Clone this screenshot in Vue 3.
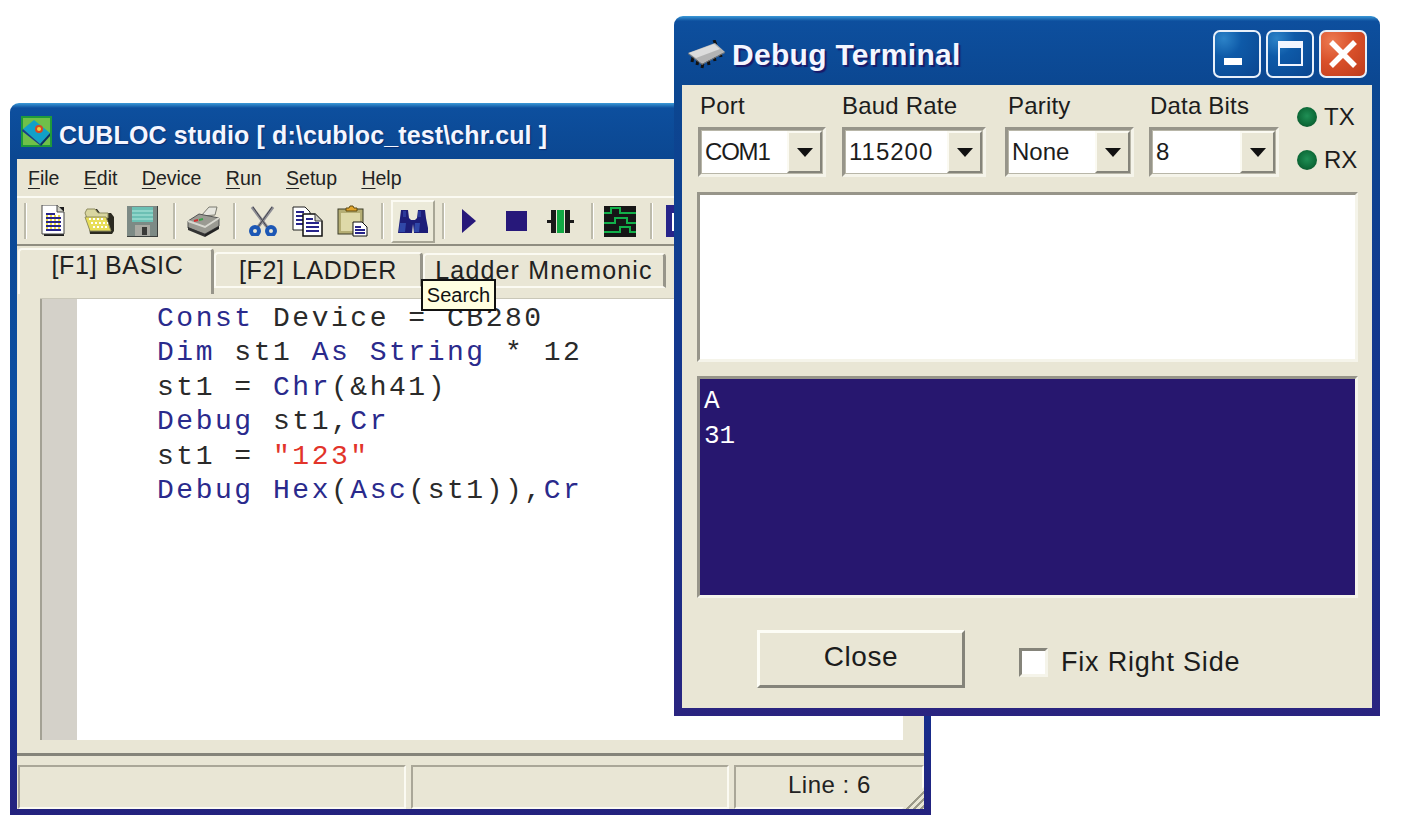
<script setup>
const menus = ['File', 'Edit', 'Device', 'Run', 'Setup', 'Help']
const fields = [
  { label: 'Port', value: 'COM1', width: 128, gap: 16, pad: 2, track: -1.2 },
  { label: 'Baud Rate', value: '115200', width: 144, gap: 19, pad: 0, track: 1 },
  { label: 'Parity', value: 'None', width: 129, gap: 15, pad: 3, track: 0 },
  { label: 'Data Bits', value: '8', width: 130, gap: 18, pad: 1, track: 0 }
]
</script>

<template>
  <div class="desk">
    <section class="win main">
      <header class="title main-title">
        <svg class="app-icon" width="31" height="31" viewBox="0 0 31 31">
          <rect width="31" height="31" fill="#1f9a3a"/>
          <rect x="2" y="2" width="27" height="27" fill="#6fc04a"/>
          <path d="M2 13 13 4l16 13-10 11z" fill="#12a0c8"/>
          <path d="M2 13l17 15 1 2L1 15z" fill="#173a8e"/>
          <path d="M19 28 29 17v3L20 30z" fill="#0b2f6b"/>
          <circle cx="18" cy="13" r="4" fill="#d8481f"/>
          <circle cx="18" cy="13" r="2" fill="#f2d23a"/>
        </svg>
        <span class="title-text">CUBLOC studio [ d:\cubloc_test\chr.cul ]</span>
      </header>
      <div class="client">
        <nav class="menubar">
          <span v-for="m in menus" :key="m" class="menu-item"><u>{{ m[0] }}</u>{{ m.slice(1) }}</span>
        </nav>
        <div class="toolbar">
          <i class="sep s0"></i>
          <svg class="g14" width="26" height="32" viewBox="0 0 26 32">
            <path d="M3 2h20v29H3z" fill="#1c1c1c"/><path d="M1 0h15l7 7v22H1z" fill="#fff" stroke="#444"/>
            <path d="M16 0v7h7" fill="#cfcfc4" stroke="#444"/>
            <path d="M5 9h9M5 13h15M5 17h15M5 21h15M5 25h15" stroke="#27248a" stroke-width="2"/>
            <path d="M5 11h15M5 15h15M5 19h15M5 23h15" stroke="#e8d84a" stroke-width="2" stroke-dasharray="2 2"/>
          </svg>
          <svg class="g17" width="30" height="28" viewBox="0 0 30 28">
            <path d="M3 6l2-4h8l3 4h11l3 4v14l-2 3H6z" fill="#2b2a20"/>
            <path d="M1 6l2-4h8l3 4h10v5H3z" fill="#d9d6a0" stroke="#8f8d60"/>
            <path d="M1 10h21l5 14H6z" fill="#e8de58" stroke="#8f8d60"/>
            <path d="M5 12h16M7 16h17M9 20h16" stroke="#fff" stroke-width="2" stroke-dasharray="2 2"/>
          </svg>
          <svg class="g13" width="31" height="31" viewBox="0 0 31 31">
            <rect width="31" height="31" fill="#7d8a85"/>
            <rect x="5" y="1" width="21" height="15" fill="#6cc0b4"/>
            <path d="M5 5h21M5 9h21M5 13h21" stroke="#9adcd0" stroke-width="1.5"/>
            <rect x="8" y="19" width="15" height="12" fill="#a9a9a2"/>
            <rect x="15" y="21" width="5" height="8" fill="#3a3a38"/>
            <path d="M31 0v31H0" fill="none" stroke="#3c3f3d" stroke-width="2"/>
          </svg>
          <i class="sep g15"></i>
          <svg class="g11" width="33" height="31" viewBox="0 0 33 31">
            <path d="M14 10 22 1h8l-2 8z" fill="#e6e6de" stroke="#7a7a70"/>
            <path d="M1 15l11-7 20 4v8l-14 8-17-6z" fill="#9a9a92" stroke="#555"/>
            <path d="M1 15l17 6 14-9" fill="none" stroke="#d8d8d0" stroke-width="2"/>
            <path d="M1 21l17 7v3L1 24z" fill="#333"/><path d="M18 28l14-8v3l-14 8z" fill="#222"/>
            <path d="M7 15l4-1" stroke="#cf3030" stroke-width="2"/><path d="M12 14l4-1" stroke="#3aa04a" stroke-width="2"/>
          </svg>
          <i class="sep g13"></i>
          <svg class="g12" width="30" height="30" viewBox="0 0 30 30">
            <path d="M4 1 19 21M25 1 10 21" stroke="#8d8d94" stroke-width="3" fill="none"/>
            <path d="M5 1 19 21M24 1 10 21" stroke="#44444c" stroke-width="1" fill="none"/>
            <circle cx="7" cy="25" r="4" fill="#e9e6d5" stroke="#1c57b5" stroke-width="4"/>
            <circle cx="23" cy="25" r="4" fill="#e9e6d5" stroke="#1c57b5" stroke-width="4"/>
          </svg>
          <svg class="g14" width="31" height="31" viewBox="0 0 31 31">
            <path d="M1 1h12l5 5v18H1z" fill="#fff" stroke="#222"/>
            <path d="M4 6h8M4 10h11M4 14h11M4 18h11" stroke="#27248a" stroke-width="2"/>
            <path d="M11 8h12l7 7v15H11z" fill="#fff" stroke="#111" stroke-width="1.5"/>
            <path d="M23 8v7h7" fill="#cfcfc4" stroke="#333"/>
            <path d="M14 13h7M14 17h13M14 21h13M14 25h13" stroke="#27248a" stroke-width="2"/>
          </svg>
          <svg class="g14" width="31" height="32" viewBox="0 0 31 32">
            <rect x="1" y="4" width="25" height="25" fill="#b5ae74" stroke="#3c3c28"/>
            <rect x="4" y="8" width="19" height="18" fill="#ded9a8"/>
            <path d="M9 6V3h3l1-2h3l1 2h3v3H9z" fill="#e2a52c" stroke="#5e4a10"/>
            <path d="M16 17h9l5 5v9H16z" fill="#fff" stroke="#111"/>
            <path d="M18 22h6M18 25h10M18 28h10" stroke="#27248a" stroke-width="2"/>
          </svg>
          <i class="sep g13"></i>
          <div class="tool-btn g7">
            <svg width="30" height="25" viewBox="0 0 30 25">
              <path d="M3 1h7l1 8 2 2h4l2-2 1-8h7l1 8 3 15H16l-1-9-1 9H0L2 9z" fill="#1d1e78"/>
              <path d="M2 14 1 23h6l1-9zM17 14l-1 9h5l1-9z" fill="#3048a8"/>
              <path d="M5 2h3v6H5zM20 2h3v6h-3z" fill="#2c3a9a"/>
            </svg>
          </div>
          <i class="sep g7"></i>
          <svg class="g17" width="14" height="24" viewBox="0 0 14 24"><path d="M0 0 14 12 0 24z" fill="#27187a"/></svg>
          <svg class="g30" width="21" height="20" viewBox="0 0 21 20"><rect width="21" height="20" fill="#27187a"/></svg>
          <svg class="g20" width="27" height="23" viewBox="0 0 27 23">
            <path d="M0 11.500h5M22 11.500h5" stroke="#1a1a1a" stroke-width="3"/>
            <rect x="4" y="0" width="5" height="23" fill="#1a1a1a"/><rect x="18" y="0" width="5" height="23" fill="#1a1a1a"/>
            <rect x="10" y="0" width="7" height="23" fill="#12a844"/>
          </svg>
          <i class="sep g17"></i>
          <svg class="g10" width="32" height="31" viewBox="0 0 32 31">
            <rect width="32" height="31" fill="#161616"/>
            <path d="M0 7h7V2h9v5h16M0 17h11v-5h12v5h9M0 26h16v-5h10v5h6" fill="none" stroke="#12b04a" stroke-width="2"/>
          </svg>
          <i class="sep g14"></i>
          <svg class="g13" width="26" height="32" viewBox="0 0 26 32"><rect width="26" height="32" fill="#27248a"/><rect x="6" y="8" width="14" height="18" fill="#fff"/></svg>
        </div>
        <div class="tabs">
          <div class="tab tab-on">[F1] BASIC</div>
          <div class="tab tab-two">[F2] LADDER</div>
          <div class="tab tab-three">Ladder Mnemonic</div>
          <div class="tooltip">Search</div>
        </div>
        <div class="editor">
          <div class="gutter"></div>
          <div class="code">
            <div class="line"><b>Const</b> Device = CB280</div>
            <div class="line"><b>Dim</b> st1 <b>As</b> <b>String</b> * 12</div>
            <div class="line">st1 = <b>Chr</b>(&amp;h41)</div>
            <div class="line"><b>Debug</b> st1,<b>Cr</b></div>
            <div class="line">st1 = <em>"123"</em></div>
            <div class="line"><b>Debug</b> <b>Hex</b>(<b>Asc</b>(st1)),<b>Cr</b></div>
          </div>
        </div>
        <div class="below"></div>
        <footer class="status">
          <div class="panel p1"></div>
          <div class="panel p2"></div>
          <div class="panel p3">Line : 6<i class="grip"></i></div>
        </footer>
      </div>
    </section>

    <section class="win debug">
      <header class="title debug-title">
        <svg class="chip" width="38" height="31" viewBox="0 0 38 31">
          <path d="M5 17l-1 5M10 20l-1 5M15 23l-1 5M20 20l1 5M26 16l1 5M32 12l1 5M26 0l2 5" stroke="#111" stroke-width="3"/>
          <path d="M0 13 27 3l10 9-23 12z" fill="#b4b4b4"/>
          <path d="M1 13 26 4l6 5-24 9z" fill="#dcdcdc"/>
          <path d="M0 13l14 11v1L0 14zM14 24l23-12v1L14 25z" fill="#777"/>
        </svg>
        <span class="debug-text">Debug Terminal</span>
        <div class="winbtns">
          <div class="wbtn"><i class="g-min"></i></div>
          <div class="wbtn"><i class="g-max"></i></div>
          <div class="wbtn wclose">
            <svg width="36" height="36" viewBox="0 0 36 36"><path d="M6 6 30 30M30 6 6 30" stroke="#fff" stroke-width="5.500"/></svg>
          </div>
        </div>
      </header>
      <div class="dclient">
        <div class="row-fields">
          <div v-for="f in fields" :key="f.label" class="field" :style="{ width: f.width + 'px', marginRight: f.gap + 'px' }">
            <label class="flabel" :style="{ paddingLeft: f.pad + 'px' }">{{ f.label }}</label>
            <div class="combo">
              <span class="cval" :style="{ letterSpacing: f.track + 'px' }">{{ f.value }}</span>
              <span class="cbtn"><i class="tri"></i></span>
            </div>
          </div>
          <div class="leds">
            <div class="led-row"><i class="led"></i>TX</div>
            <div class="led-row"><i class="led"></i>RX</div>
          </div>
        </div>
        <div class="txbox"></div>
        <div class="term">
          <div>A</div>
          <div>31</div>
        </div>
        <div class="actions">
          <button class="close-btn">Close</button>
          <i class="check"></i>
          <span class="check-label">Fix Right Side</span>
        </div>
      </div>
    </section>
  </div>
</template>

<style>
html, body { margin: 0; background: #fff; }
</style>

<style scoped>
.desk { position: relative; width: 1402px; height: 826px; overflow: hidden; background: #fff; font-family: "Liberation Sans", Arial, sans-serif; color: #222; }
.win { position: absolute; box-sizing: border-box; display: flex; flex-direction: column; border-radius: 9px 9px 0 0; }
.main { left: 10px; top: 103px; width: 921px; height: 712px; padding: 0 7px 6px; background: linear-gradient(180deg, #3b9ad8 0, #0d4f9e 5px, #0b4791 56px, #0c4ea2 300px, #142f8e 600px, #24227e 100%); }
.debug { left: 674px; top: 16px; width: 706px; height: 700px; padding: 0 8px 8px; background: linear-gradient(180deg, #3b9ad8 0, #0d4f9e 5px, #0b4791 69px, #12398f 300px, #1e2a84 600px, #2a2480 100%); }
.title { flex: none; display: flex; align-items: center; color: #f4f6ff; font-weight: 700; }
.main-title { height: 56px; padding-left: 4px; }
.app-icon { flex: none; }
.title-text { margin-left: 7px; padding-top: 8px; font-size: 25px; letter-spacing: .12px; white-space: pre; text-shadow: 1px 1px 1px #082c70; }
.client { flex: 1; min-height: 0; display: flex; flex-direction: column; background: #e9e6d5; }
.menubar { flex: none; box-sizing: border-box; height: 37px; padding: 2px 0 0 11px; display: flex; align-items: center; gap: 24.400px; font-size: 19.500px; }
.menu-item u { text-underline-offset: 3px; }
.toolbar { flex: none; box-sizing: border-box; height: 50px; border-top: 2px solid #fbfaf2; border-bottom: 2px solid #8f8d80; display: flex; align-items: center; }
.toolbar svg { flex: none; }
.sep { flex: none; display: block; width: 3px; height: 36px; background: #bdbbab; border-right: 1px solid #fff; box-sizing: border-box; }
.s0 { margin-left: 7px; }
.g7 { margin-left: 7px; } .g10 { margin-left: 10px; } .g11 { margin-left: 11px; } .g12 { margin-left: 12px; }
.g13 { margin-left: 13px; } .g14 { margin-left: 14px; } .g15 { margin-left: 15px; } .g17 { margin-left: 17px; }
.g20 { margin-left: 20px; } .g30 { margin-left: 30px; }
.tool-btn { flex: none; box-sizing: border-box; width: 44px; height: 43px; display: flex; align-items: center; justify-content: center; background: #ecead9; border: 2px solid; border-color: #fbfaf2 #a8a696 #a8a696 #fbfaf2; }
.tabs { flex: none; position: relative; box-sizing: border-box; height: 52px; padding-top: 2px; display: flex; align-items: flex-start; }
.tab { box-sizing: border-box; white-space: nowrap; font-size: 25px; display: flex; align-items: center; justify-content: center; background: #e9e6d5; border-top: 2px solid #fbfaf2; border-left: 2px solid #fbfaf2; border-right: 3px solid #97958a; border-radius: 4px 4px 0 0; }
.tab-on { margin-left: 1px; width: 196px; height: 46px; letter-spacing: .7px; padding: 0 0 14px 4px; }
.tab-two { margin-top: 4px; width: 209px; height: 36px; letter-spacing: .6px; border-bottom: 2px solid #fbfaf2; }
.tab-three { margin-top: 5px; width: 243px; height: 35px; letter-spacing: 1.150px; border-bottom: 2px solid #fbfaf2; }
.tooltip { position: absolute; left: 404px; top: 33px; box-sizing: border-box; width: 75px; height: 32px; border: 2px solid #111; background: #ffffe1; color: #111; font-size: 20px; display: flex; align-items: center; justify-content: center; }
.editor { flex: none; box-sizing: border-box; height: 442px; margin: 0 21px 0 23px; display: flex; background: #fff; border-top: 1px solid #c9c7b8; }
.gutter { flex: none; box-sizing: border-box; width: 37px; background: #d4d1c9; border-left: 2px solid #a3a194; }
.code { padding: 3px 0 0 80px; font-family: "Liberation Mono", "DejaVu Sans Mono", monospace; font-size: 28px; line-height: 34.400px; letter-spacing: 2.530px; color: #2a2a2a; }
.line { height: 34.400px; white-space: pre; }
.code b { font-weight: 400; color: #2a2a8c; }
.code em { font-style: normal; color: #e2342a; }
.below { flex: none; box-sizing: border-box; height: 16px; border-bottom: 3px solid #85847a; }
.status { flex: 1; min-height: 0; display: flex; padding-top: 9px; gap: 5px; }
.panel { box-sizing: border-box; height: 44px; border-top: 2px solid #aaa798; border-left: 2px solid #aaa798; border-bottom: 2px solid #fbfaf2; border-right: 2px solid #fbfaf2; }
.p1 { width: 388px; margin-left: 1px; }
.p2 { width: 318px; }
.p3 { position: relative; flex: 1; font-size: 24px; letter-spacing: .5px; display: flex; align-items: center; padding-left: 52px; padding-bottom: 4px; }
.grip { position: absolute; right: -2px; bottom: -2px; width: 22px; height: 22px; background: repeating-linear-gradient(135deg, #e9e6d5 0 3px, #9b9989 3px 5px); clip-path: polygon(100% 0, 100% 100%, 0 100%); }

.debug-title { height: 69px; position: relative; }
.chip { flex: none; margin-left: 6px; margin-top: 10px; }
.debug-text { margin-left: 6px; padding-top: 8px; font-size: 30px; letter-spacing: .3px; text-shadow: 2px 2px 1px #1a1a6a; }
.winbtns { margin-left: auto; margin-right: 5px; margin-top: 6px; display: flex; gap: 5px; }
.wbtn { box-sizing: border-box; width: 48px; height: 48px; border: 2px solid #e8f0fa; border-radius: 7px; background: radial-gradient(circle at 20% 15%, #2c83c8 0, #0e5aa8 35%, #0a4690 100%); position: relative; display: flex; align-items: center; justify-content: center; }
.g-min { position: absolute; left: 9px; top: 26px; width: 18px; height: 7px; background: #fff; }
.g-max { box-sizing: border-box; width: 25px; height: 25px; border: 2px solid #f2f6ff; border-top-width: 7px; }
.wclose { background: radial-gradient(circle at 25% 20%, #ec7a52 0, #d9502a 45%, #bd3c1c 100%); }

.dclient { flex: 1; min-height: 0; display: flex; flex-direction: column; background: #e9e6d5; padding: 0 14px 0 15px; }
.row-fields { flex: none; display: flex; padding-left: 1px; }
.field { flex: none; }
.flabel { display: block; height: 42px; line-height: 41px; font-size: 24px; letter-spacing: .2px; color: #1c1c1c; }
.combo { box-sizing: border-box; height: 50px; display: flex; background: #fff; border: 3px solid; border-color: #97958a #f5f4ea #f5f4ea #97958a; box-shadow: inset 0 0 0 1px #b8b6a8; }
.cval { flex: 1; display: flex; align-items: center; padding-left: 4px; font-size: 24px; white-space: nowrap; color: #1c1c1c; }
.cbtn { flex: none; box-sizing: border-box; width: 35px; margin: 1px; background: #e9e6d5; border: 2px solid; border-color: #fbfaf2 #85847a #85847a #fbfaf2; display: flex; align-items: center; justify-content: center; }
.tri { display: block; width: 0; height: 0; border-left: 8px solid transparent; border-right: 8px solid transparent; border-top: 9px solid #111; }
.leds { flex: none; padding-top: 22px; display: flex; flex-direction: column; gap: 23px; }
.led-row { height: 20px; display: flex; align-items: center; gap: 7px; font-size: 24px; color: #1c1c1c; }
.led { display: block; width: 20px; height: 20px; border-radius: 50%; background: radial-gradient(circle at 50% 45%, #1f8f55 0, #0d6a38 60%, #123c22 100%); }
.txbox { flex: none; box-sizing: border-box; height: 170px; margin-top: 15px; background: #fff; border: 3px solid; border-color: #97958a #f5f4ea #f5f4ea #97958a; }
.term { flex: none; box-sizing: border-box; height: 222px; margin: 14px 0 0; padding: 5px 0 0 4px; background: #27176f; border: 3px solid; border-color: #97958a #f5f4ea #f5f4ea #97958a; color: #fff; font-family: "Liberation Mono", monospace; font-size: 26px; line-height: 35px; }
.actions { flex: none; display: flex; align-items: flex-start; margin-top: 32px; padding-left: 60px; }
.close-btn { box-sizing: border-box; width: 208px; height: 58px; padding: 0 0 4px; margin: 0; background: #e9e6d5; border: 3px solid; border-color: #fdfdf6 #85847a #85847a #fdfdf6; font-family: "Liberation Sans", sans-serif; font-size: 28px; letter-spacing: .6px; color: #1c1c1c; }
.check { display: block; box-sizing: border-box; width: 29px; height: 29px; margin: 18px 0 0 54px; background: #fff; border: 3px solid; border-color: #85847a #f5f4ea #f5f4ea #85847a; }
.check-label { margin: 17px 0 0 13px; font-size: 27px; letter-spacing: .8px; color: #1c1c1c; white-space: nowrap; }
</style>
